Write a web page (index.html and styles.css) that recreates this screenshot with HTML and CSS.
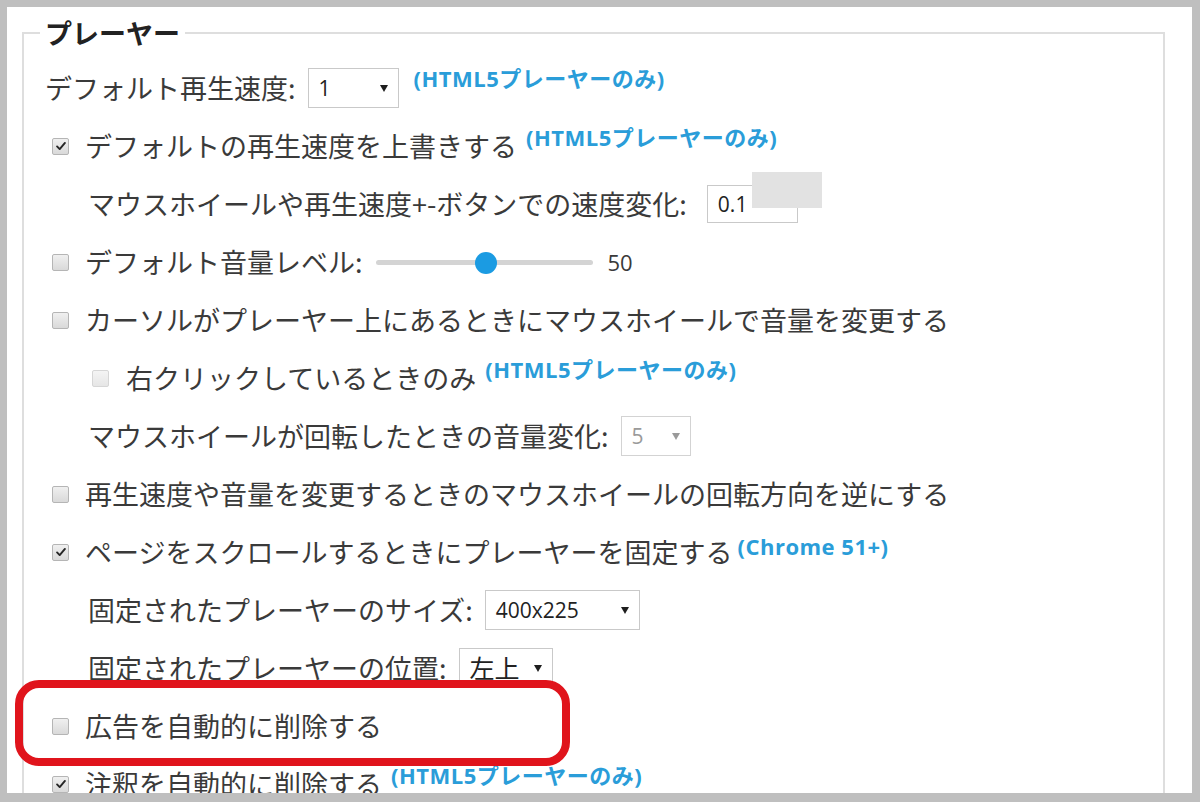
FILE: index.html
```html
<!DOCTYPE html>
<html lang="ja">
<head>
<meta charset="utf-8">
<title>プレーヤー設定</title>
<link rel="stylesheet" href="styles.css">
</head>
<body>
<div class="frame">
  <fieldset class="group">
    <legend class="group-title">プレーヤー</legend>

    <div class="row">
      <span class="label">デフォルト再生速度:</span>
      <div class="select sel-speed"><span class="sel-val">1</span><span class="arrow"></span></div>
      <span class="note note-wide">(HTML5プレーヤーのみ)</span>
    </div>

    <div class="row check-row">
      <span class="box checked"><svg viewBox="0 0 16 16"><polyline points="3.5,8.5 6.5,11.5 12.5,4.5"/></svg></span>
      <span class="label">デフォルトの再生速度を上書きする</span>
      <span class="note">(HTML5プレーヤーのみ)</span>
    </div>

    <div class="row sub-row">
      <span class="label">マウスホイールや再生速度+-ボタンでの速度変化:</span>
      <div class="input"><span class="sel-val">0.1</span></div>
    </div>

    <div class="row check-row">
      <span class="box"></span>
      <span class="label">デフォルト音量レベル:</span>
      <div class="slider"><span class="thumb"></span></div>
      <span class="slider-val">50</span>
    </div>

    <div class="row check-row">
      <span class="box"></span>
      <span class="label">カーソルがプレーヤー上にあるときにマウスホイールで音量を変更する</span>
    </div>

    <div class="row check-row nested">
      <span class="box disabled"></span>
      <span class="label">右クリックしているときのみ</span>
      <span class="note">(HTML5プレーヤーのみ)</span>
    </div>

    <div class="row sub-row">
      <span class="label">マウスホイールが回転したときの音量変化:</span>
      <div class="select sel-step off"><span class="sel-val">5</span><span class="arrow"></span></div>
    </div>

    <div class="row check-row">
      <span class="box"></span>
      <span class="label">再生速度や音量を変更するときのマウスホイールの回転方向を逆にする</span>
    </div>

    <div class="row check-row">
      <span class="box checked"><svg viewBox="0 0 16 16"><polyline points="3.5,8.5 6.5,11.5 12.5,4.5"/></svg></span>
      <span class="label">ページをスクロールするときにプレーヤーを固定する</span>
      <span class="note note-tight">(Chrome 51+)</span>
    </div>

    <div class="row sub-row">
      <span class="label">固定されたプレーヤーのサイズ:</span>
      <div class="select sel-size"><span class="sel-val">400x225</span><span class="arrow"></span></div>
    </div>

    <div class="row sub-row">
      <span class="label">固定されたプレーヤーの位置:</span>
      <div class="select sel-pos"><span class="sel-val">左上</span><span class="arrow"></span></div>
    </div>

    <div class="row check-row">
      <span class="box"></span>
      <span class="label">広告を自動的に削除する</span>
    </div>

    <div class="row check-row">
      <span class="box checked"><svg viewBox="0 0 16 16"><polyline points="3.5,8.5 6.5,11.5 12.5,4.5"/></svg></span>
      <span class="label">注釈を自動的に削除する</span>
      <span class="note">(HTML5プレーヤーのみ)</span>
    </div>
  </fieldset>

  <div class="smudge"></div>
  <div class="highlight"></div>
</div>
</body>
</html>
```

FILE: styles.css
```css
* { box-sizing: border-box; }

html, body {
  margin: 0;
  padding: 0;
  background: #ffffff;
}

.frame {
  position: relative;
  width: 1200px;
  height: 802px;
  border-style: solid;
  border-color: #bfbfbf;
  border-width: 7px 8px 9px 7px;
  background: #ffffff;
  overflow: hidden;
  font-family: "Noto Sans CJK JP", "Noto Sans", sans-serif;
  color: #3a3a3a;
}

.group {
  margin: 10px 27px 0 15px;
  border: 2px solid #dedede;
  padding: 10px 0 0 21px;
  min-width: 0;
}

.group-title {
  font-size: 27px;
  font-weight: 700;
  line-height: 32px;
  padding: 0 5px;
  margin-left: -5px;
  color: #222222;
}

.row {
  display: flex;
  align-items: center;
  height: 58px;
  font-size: 27px;
  line-height: 34px;
  white-space: nowrap;
}

.check-row { padding-left: 7px; }
.check-row .box { margin-right: 16px; }
.sub-row { padding-left: 43px; }
.nested { padding-left: 47px; }
.nested .box { margin-right: 17px; }

.box {
  flex: none;
  width: 17px;
  height: 17px;
  border: 1px solid #b5b5b5;
  border-radius: 2px;
  background: linear-gradient(#f0f0f0, #d9d9d9);
  display: flex;
  align-items: center;
  justify-content: center;
}
.box svg { width: 14px; height: 14px; }
.box polyline {
  fill: none;
  stroke: #262626;
  stroke-width: 2.2;
  stroke-linecap: round;
  stroke-linejoin: round;
}
.box.disabled {
  border-color: #d6d6d6;
  background: linear-gradient(#f4f4f4, #e6e6e6);
}

.note {
  font-family: "Open Sans", "Noto Sans CJK JP", sans-serif;
  font-weight: 700;
  font-size: 22px;
  letter-spacing: 0.5px;
  line-height: 26px;
  color: #2a9dd9;
  margin-left: 9px;
  margin-bottom: 18px;
}
.note-wide { margin-left: 15px; margin-bottom: 20px; }
.note-tight { margin-left: 5px; margin-bottom: 12px; }

.select, .input {
  flex: none;
  display: flex;
  align-items: center;
  height: 40px;
  border: 1px solid #c9c9c9;
  background: #ffffff;
  margin-left: 12px;
  padding: 0 10px;
  font-family: "Open Sans", "Noto Sans CJK JP", sans-serif;
  font-size: 21px;
  color: #222222;
}
.sel-val { flex: 1; }
.arrow {
  width: 0;
  height: 0;
  border-left: 4px solid transparent;
  border-right: 4px solid transparent;
  border-top: 7px solid #1e1e1e;
}
.sel-speed { width: 91px; }
.sel-step { width: 70px; }
.sel-size { width: 155px; }
.sel-pos { width: 94px; font-size: 25px; }
.input { width: 91px; height: 38px; margin-left: 20px; }

.select.off { color: #9a9a9a; border-color: #d3d3d3; }
.select.off .arrow { border-top-color: #9a9a9a; }

.slider {
  position: relative;
  flex: none;
  width: 217px;
  height: 5px;
  margin-left: 13px;
  background: #d4d4d4;
  border-radius: 3px;
}
.thumb {
  position: absolute;
  left: 99px;
  top: -8px;
  width: 22px;
  height: 22px;
  border-radius: 50%;
  background: #1b9be2;
}
.slider-val {
  margin-left: 15px;
  font-family: "Open Sans", sans-serif;
  font-size: 22px;
}

.smudge {
  position: absolute;
  left: 745px;
  top: 165px;
  width: 70px;
  height: 36px;
  background: #e2e2e2;
}

.highlight {
  position: absolute;
  left: 8px;
  top: 673px;
  width: 555px;
  height: 86px;
  border: 8px solid #e0141c;
  border-radius: 24px;
}
```
